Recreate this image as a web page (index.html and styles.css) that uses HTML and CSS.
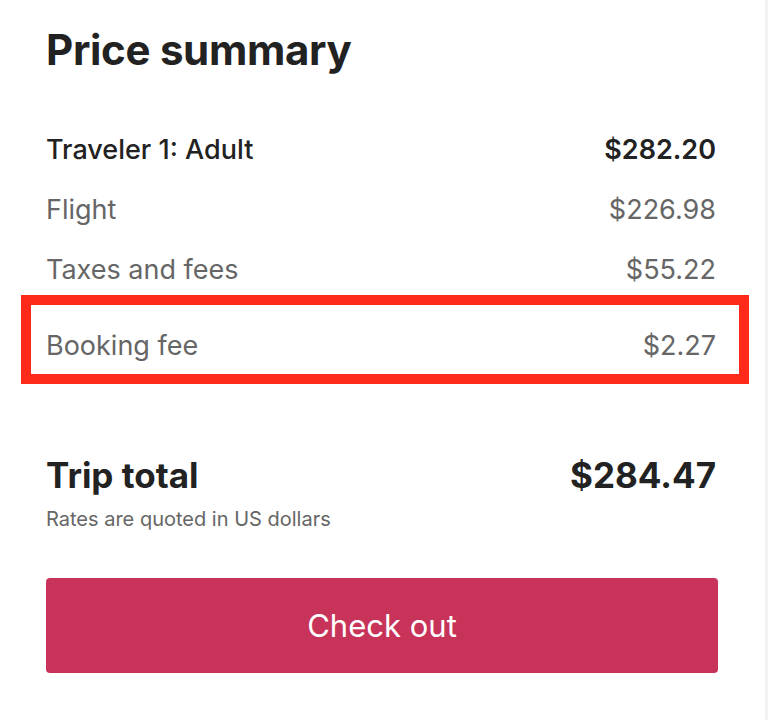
FILE: index.html
```html
<!DOCTYPE html>
<html lang="en">
<head>
    <meta charset="UTF-8">
    <meta name="viewport" content="width=device-width, initial-scale=1.0">
    <title>Price summary</title>
    <link rel="stylesheet" href="styles.css">
</head>
<body>

<div class="summary">
    <h2 class="title">Price summary</h2>

    <div class="row row-main">
        <span>Traveler 1: Adult</span>
        <span class="amount">$282.20</span>
    </div>
    <div class="row">
        <span>Flight</span>
        <span>$226.98</span>
    </div>
    <div class="row">
        <span>Taxes and fees</span>
        <span>$55.22</span>
    </div>
    <div class="row highlight">
        <span>Booking fee</span>
        <span>$2.27</span>
    </div>

    <div class="total">
        <span>Trip total</span>
        <span>$284.47</span>
    </div>
    <p class="note">Rates are quoted in US dollars</p>

    <button type="button" class="checkout">Check out</button>
</div>

</body>
</html>
```

FILE: styles.css
```css
body {
    margin: 0;
    font-family: Inter, "Noto Sans", sans-serif;
    background-color: #fff;
    color: #222;
    min-height: 720px;
    box-shadow: inset -3px 0 0 #f2f2f2;
}
.summary {
    padding: 26px 50px 0 46px;
}
.title {
    margin: 0 0 46px;
    font-size: 42px;
    line-height: 48px;
    font-weight: 700;
    letter-spacing: -0.3px;
}
.row {
    display: flex;
    justify-content: space-between;
    padding-right: 2px;
    font-size: 27px;
    line-height: 60px;
    color: #666;
}
.row-main {
    color: #222;
    font-weight: 500;
}
.row-main .amount {
    font-weight: 600;
}
.highlight {
    margin: -5px -31px 0 -25px;
    padding: 21px 23px 8px 15px;
    border: 10px solid #ff2a1a;
    line-height: 40px;
}
.total {
    display: flex;
    justify-content: space-between;
    padding-right: 2px;
    margin-top: 69px;
    font-size: 35px;
    line-height: 44px;
    font-weight: 700;
}
.note {
    margin: 9px 0 0;
    font-size: 20px;
    line-height: 26px;
    color: #666;
}
.checkout {
    display: block;
    width: 100%;
    height: 95px;
    margin-top: 46px;
    border: none;
    border-radius: 4px;
    background-color: #c8335a;
    color: #fff;
    font-family: inherit;
    font-size: 31px;
    cursor: pointer;
}
```
